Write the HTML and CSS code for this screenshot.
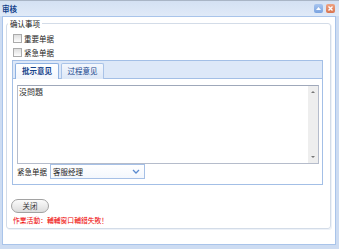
FILE: index.html
```html
<!DOCTYPE html>
<html lang="zh">
<head>
    <meta charset="UTF-8">
    <title>审核</title>
    <link rel="stylesheet" href="styles.css">
</head>
<body>
<div class="window">
    <div class="window-header">
        <span class="window-title">审核</span>
        <div class="tools">
            <span class="tool tool-collapse">
                <svg width="9" height="9" viewBox="0 0 9 9"><path d="M2 6 L4.5 3 L7 6 Z" fill="#fff"/></svg>
            </span>
            <span class="tool tool-close">
                <svg width="9" height="9" viewBox="0 0 9 9"><path d="M2.5 2.5 L6.5 6.5 M6.5 2.5 L2.5 6.5" stroke="#fff" stroke-width="1.4"/></svg>
            </span>
        </div>
    </div>

    <div class="window-body">
        <fieldset class="confirm">
            <legend>确认事项</legend>
            <div class="checks">
                <label class="check-row"><input type="checkbox">重要单据</label>
                <label class="check-row"><input type="checkbox">紧急单据</label>
            </div>

            <div class="tab-panel">
                <div class="tab-strip">
                    <span class="tab active">批示意见</span>
                    <span class="tab">过程意见</span>
                </div>
                <div class="tab-body">
                    <div class="editor">
                        <textarea>没問題</textarea>
                        <div class="scrollbar">
                            <span class="arrow up"></span>
                            <span class="arrow down"></span>
                        </div>
                    </div>
                    <div class="field-row">
                        <label>紧急单据</label>
                        <div class="combo">
                            <span>客服经理</span>
                            <svg width="8" height="5" viewBox="0 0 8 5"><path d="M1 1 L4 4 L7 1" fill="none" stroke="#5b8bd0" stroke-width="1.3"/></svg>
                        </div>
                    </div>
                </div>
            </div>

            <button class="btn-close" type="button">关闭</button>
            <p class="error">作業活動：輔輔窗口輔錯失敗！</p>
        </fieldset>
    </div>
</div>
</body>
</html>
```

FILE: styles.css
```css
body {
    margin: 0;
    font-family: "Noto Sans CJK SC", "Noto Sans CJK TC", sans-serif;
    font-size: 7.5px;
    line-height: 9px;
    color: #222;
}

.window {
    height: 249px;
    box-sizing: border-box;
    display: flex;
    flex-direction: column;
    padding: 0 3px 4px 2px;
    background: #cddcf2;
    border-top: 1px solid #a9b5c6;
}

.window-header {
    height: 15px;
    display: flex;
    align-items: center;
    justify-content: space-between;
    margin: 0 -3px 0 -2px;
    padding: 0 4px 0 2px;
    background: linear-gradient(#d4e1f3, #e0eaf8);
}
.window-title {
    font-weight: bold;
    color: #15428b;
}
.tools {
    display: flex;
    gap: 3px;
}
.tool {
    width: 9px;
    height: 9px;
    border-radius: 2px;
    display: block;
}
.tool svg {
    display: block;
}
.tool-collapse {
    background: linear-gradient(#a8c5ef, #7aa3e0);
}
.tool-close {
    background: linear-gradient(#eea383, #d9744f);
}

.window-body {
    flex: 1;
    background: #fff;
    border: 1px solid #a9c4ea;
    padding: 2px 4px 0 3px;
}

.confirm {
    margin: 0;
    padding: 0 7px 3px 5px;
    border: 1px solid #d3dce8;
    border-radius: 3px;
    box-shadow: 1px 1px 0 #eef2f8;
}
.confirm legend {
    margin-left: -4px;
    padding: 0 2px;
    color: #222;
}

.checks {
    padding-top: 3px;
}
.check-row {
    display: flex;
    align-items: center;
    gap: 2px;
    height: 14px;
    margin-left: 1px;
}
.check-row input {
    appearance: none;
    -webkit-appearance: none;
    width: 9px;
    height: 9px;
    margin: 0;
    border: 1px solid #ababab;
    background: linear-gradient(#dedede, #fdfdfd);
}

.tab-panel {
    margin-top: 1px;
}
.tab-strip {
    height: 17px;
    display: flex;
    align-items: flex-end;
    gap: 2px;
    padding-left: 2px;
    background: #dde8f8;
    border: 1px solid #a3bfe6;
}
.tab {
    height: 16px;
    box-sizing: border-box;
    width: 43px;
    text-align: center;
    line-height: 13px;
    color: #15428b;
    border: 1px solid #a9c3e8;
    border-bottom: none;
    border-radius: 2px 2px 0 0;
    background: linear-gradient(#f3f7fd, #dce7f7);
    margin-bottom: -1px;
}
.tab.active {
    width: 44px;
    font-weight: bold;
    background: linear-gradient(#ffffff, #f2f6fd);
    border-color: #8fb2e2;
}

.tab-body {
    background: #fff;
    border: 1px solid #a3bfe6;
    border-top: none;
    padding: 6px 3px 5px 4px;
}

.editor {
    display: flex;
    height: 79px;
    box-sizing: border-box;
    border: 1px solid #b5bccb;
    border-top-color: #9fa8ba;
}
.editor textarea {
    flex: 1;
    border: none;
    outline: none;
    resize: none;
    padding: 1px 1px;
    margin: 0;
    font-family: "Noto Sans CJK TC", "Noto Sans CJK SC", sans-serif;
    font-size: 8px;
    line-height: 9px;
    color: #333;
    overflow: hidden;
}
.scrollbar {
    width: 10px;
    background: #eeeeee;
    display: flex;
    flex-direction: column;
    justify-content: space-between;
    align-items: center;
    padding: 5px 0;
}
.arrow {
    width: 0;
    height: 0;
    border-left: 2px solid transparent;
    border-right: 2px solid transparent;
}
.arrow.up {
    border-bottom: 2px solid #777;
}
.arrow.down {
    border-top: 2px solid #777;
}

.field-row {
    display: flex;
    align-items: center;
    gap: 3px;
    height: 15px;
}
.combo {
    width: 95px;
    height: 15px;
    box-sizing: border-box;
    display: flex;
    align-items: center;
    justify-content: space-between;
    padding: 0 4px 0 2px;
    border: 1px solid #a6c0e6;
    background: linear-gradient(#ffffff, #f3f7fd);
}
.combo svg {
    display: block;
}

.btn-close {
    display: block;
    margin: 14px 0 0 -1px;
    width: 38px;
    height: 14px;
    padding: 0;
    border: 1px solid #a2a2a2;
    border-radius: 7px;
    background: linear-gradient(#fbfbfb, #dcdcdc);
    font-family: "Noto Sans CJK SC", sans-serif;
    font-size: 7.5px;
    line-height: 12px;
    color: #333;
}

.error {
    margin: 3px 0 0 1px;
    font-size: 6.8px;
    color: #ee0000;
}
```
